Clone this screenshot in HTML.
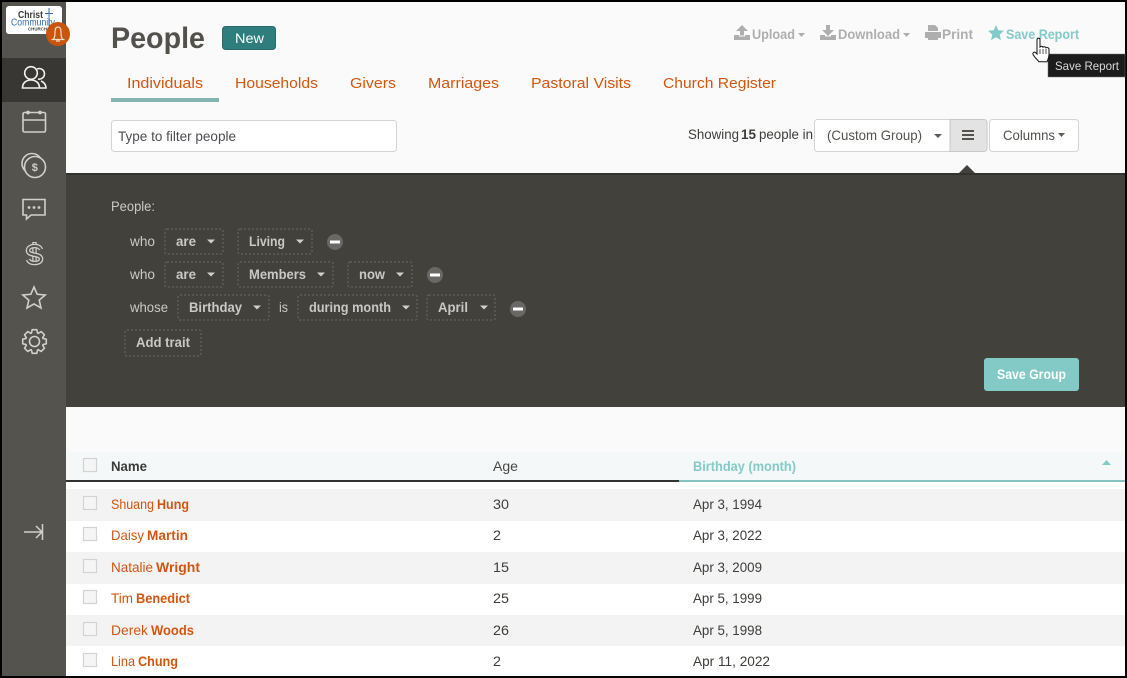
<!DOCTYPE html>
<html><head><meta charset="utf-8"><title>People</title>
<style>
html,body{margin:0;padding:0;width:1127px;height:678px;overflow:hidden;background:#000}
svg{display:block}
text{font-family:"Liberation Sans",sans-serif;font-size:14px;fill:#4a4845}
.o{fill:#d2560f;font-size:14px}
.ob{fill:#d2560f;font-size:14px;font-weight:bold}
.t{fill:#d2560f;font-size:15px}
.g{fill:#aeaeae;font-size:14px;font-weight:bold}
.d{fill:#c9c9c6;font-size:14px}
.db{fill:#c8c8c5;font-size:14px;font-weight:bold}
.tr{fill:#3f3d3a;font-size:14px}
.box{fill:none;stroke:#5f5d58;stroke-width:1.5;stroke-dasharray:2 2}
.ic{fill:none;stroke:#cfcfcc;stroke-width:1.6}
.cb{fill:#f5f5f5;stroke:#d3d3d3;stroke-width:1.2}
</style></head><body>
<svg width="1127" height="678" viewBox="0 0 1127 678" xmlns="http://www.w3.org/2000/svg">
<rect width="1127" height="678" fill="#000"/>
<rect x="2" y="2" width="1123" height="674" fill="#fafafa"/>
<!-- sidebar -->
<rect x="2" y="2" width="64" height="674" fill="#55534d"/>
<rect x="2" y="58" width="64" height="44" fill="#393734"/>
<!-- logo -->
<rect x="6" y="6" width="56" height="28" rx="3" fill="#fff"/>
<path d="M49 8V26M45 13.500H53" stroke="#2f6fae" stroke-width="1"/>
<text x="18" y="18" textLength="25" lengthAdjust="spacingAndGlyphs" style="font-size:10px;font-weight:bold;fill:#3a3a3a">Christ</text>
<text x="11" y="25.500" textLength="44" lengthAdjust="spacingAndGlyphs" style="font-size:10px;fill:#2f6fae">Community</text>
<text x="28" y="30.500" textLength="19" lengthAdjust="spacingAndGlyphs" style="font-size:4.500px;font-weight:bold;fill:#444">CHURCH</text>
<circle cx="58" cy="34" r="12" fill="#c9540c"/>
<path d="M51.500 39.500h13M53.500 39c1.500-2 1.500-4 1.500-7s1-5 3-5 3 2 3 5 0 5 1.500 7M56 41h4" fill="none" stroke="#f5d9c3" stroke-width="1.200"/>
<!-- people icon -->
<g fill="none" stroke="#f2f2f0" stroke-width="1.600">
<circle cx="31" cy="73" r="6.300"/>
<path d="M37 69a5.300 5.300 0 1 1 1 10"/>
<path d="M22.500 88c0-5 3.500-8 8.500-8s8.500 3 8.500 8z"/>
<path d="M41 81c3 1 5 4 5 7h-6"/>
</g>
<!-- calendar -->
<g class="ic"><rect x="23" y="112.500" width="22.500" height="19.500" rx="1.500"/><path d="M23 120H45.500"/></g>
<circle cx="28" cy="112.500" r="1.900" fill="#cfcfcc"/><circle cx="40" cy="112.500" r="1.900" fill="#cfcfcc"/>
<!-- coins -->
<circle class="ic" cx="32" cy="163.500" r="10"/>
<circle cx="35" cy="167" r="10.500" fill="#55534d" stroke="#cfcfcc" stroke-width="1.600"/>
<text x="31.800" y="171" style="font-size:11px;font-weight:bold;fill:#cfcfcc">$</text>
<!-- chat -->
<path class="ic" d="M23 199.500H45V215H31L26.500 219V215H23z"/>
<g fill="#cfcfcc"><circle cx="29" cy="207.500" r="1.400"/><circle cx="34" cy="207.500" r="1.400"/><circle cx="39" cy="207.500" r="1.400"/></g>
<!-- dollar -->
<g fill="none">
<path d="M34.500 242V265" stroke="#cfcfcc" stroke-width="4.500"/>
<path d="M34.500 243V264" stroke="#55534d" stroke-width="2"/>
<path d="M41 249.500c-1-2.500-3.500-3.500-6.500-3.500-4 0-6.500 2-6.500 4.500 0 6 13 2.500 13 8.500 0 2.500-2.500 4-6.500 4-3 0-5.500-1-6.500-3.500" stroke="#cfcfcc" stroke-width="4.600"/>
<path d="M41 249.500c-1-2.500-3.500-3.500-6.500-3.500-4 0-6.500 2-6.500 4.500 0 6 13 2.500 13 8.500 0 2.500-2.500 4-6.500 4-3 0-5.500-1-6.500-3.500" stroke="#55534d" stroke-width="2"/>
</g>
<!-- star -->
<path class="ic" d="M34 287l3.200 7.300 8 .7-6 5.200 1.800 7.800-7-4.100-7 4.100 1.800-7.800-6-5.200 8-.7z"/>
<!-- gear -->
<g class="ic" transform="translate(34.500 341.500)" stroke-linejoin="round"><circle r="5"/><polygon points="8.46,-3.08 11.78,-2.29 11.78,2.29 8.46,3.08 8.16,3.80 9.95,6.71 6.71,9.95 3.80,8.16 3.08,8.46 2.29,11.78 -2.29,11.78 -3.08,8.46 -3.80,8.16 -6.71,9.95 -9.95,6.71 -8.16,3.80 -8.46,3.08 -11.78,2.29 -11.78,-2.29 -8.46,-3.08 -8.16,-3.80 -9.95,-6.71 -6.71,-9.95 -3.80,-8.16 -3.08,-8.46 -2.29,-11.78 2.29,-11.78 3.08,-8.46 3.80,-8.16 6.71,-9.95 9.95,-6.71 8.16,-3.80"/></g>
<!-- collapse -->
<path d="M24 532H41M36 526l6 6-6 6M42.500 524V540" fill="none" stroke="#cfcfcc" stroke-width="1.500"/>

<!-- header -->
<text x="111" y="48" textLength="94" lengthAdjust="spacingAndGlyphs" style="font-size:30px;font-weight:bold;fill:#54514d">People</text>
<rect x="222.500" y="26.500" width="53" height="23" rx="3" fill="#2f7d7c" stroke="#286b6a"/>
<text x="235" y="43" textLength="29" lengthAdjust="spacingAndGlyphs" style="font-size:14px;fill:#fff">New</text>

<!-- toolbar -->
<path d="M734 35h5v1.500h6V35h5v5h-16zM742 25l6 6h-4v4.500h-4V31h-4z" fill="#aeaeae"/>
<text class="g" x="752" y="39" textLength="43" lengthAdjust="spacingAndGlyphs">Upload</text>
<path d="M798 33h7l-3.500 4z" fill="#aeaeae"/>
<path d="M820 35h5v1.500h6V35h5v5h-16zM826 25h4v5h4l-6 6-6-6h4z" fill="#aeaeae"/>
<text class="g" x="838" y="39" textLength="62" lengthAdjust="spacingAndGlyphs">Download</text>
<path d="M903 33h7l-3.500 4z" fill="#aeaeae"/>
<path d="M928 25h7l3 3v3h-10zM925 32h16v6h-3v2h-10v-2h-3z" fill="#aeaeae"/>
<text class="g" x="942" y="39" textLength="31" lengthAdjust="spacingAndGlyphs">Print</text>
<path d="M996 25l2.300 5.200 5.700.6-4.300 3.800 1.300 5.600-5-3-5 3 1.300-5.600-4.300-3.800 5.700-.6z" fill="#83cbc9"/>
<text x="1006" y="39" textLength="73" lengthAdjust="spacingAndGlyphs" style="font-weight:bold;fill:#83cbc9">Save Report</text>
<!-- tooltip -->
<rect x="1048" y="54" width="77" height="23" fill="#1c1c1c" stroke="#777" stroke-width=".5"/>
<text x="1055" y="70" textLength="64" lengthAdjust="spacingAndGlyphs" style="font-size:12px;fill:#d9d9d9">Save Report</text>
<!-- cursor -->
<path d="M1037 40c0-2.500 3-2.500 3 0v7c1-1 2.500-1 3 .2 1-.8 2.500-.6 3 .6 1-.6 3-.2 3 1.500v5c0 3-1 5-2 7.500h-8c-1.500-2-5-5-6-7.500-.5-1.500 1-2.800 2.500-1.800l1.500 1.500z" fill="#fff" stroke="#111" stroke-width="1"/>
<path d="M1040 49v5M1043 49v5M1046 49v5" stroke="#111" stroke-width=".7"/>

<!-- tabs -->
<text class="t" x="127" y="88" textLength="76" lengthAdjust="spacingAndGlyphs">Individuals</text>
<rect x="111" y="98" width="108" height="4" fill="#85b3b0"/>
<text class="t" x="235" y="88" textLength="83" lengthAdjust="spacingAndGlyphs">Households</text>
<text class="t" x="350" y="88" textLength="46" lengthAdjust="spacingAndGlyphs">Givers</text>
<text class="t" x="428" y="88" textLength="71" lengthAdjust="spacingAndGlyphs">Marriages</text>
<text class="t" x="531" y="88" textLength="100" lengthAdjust="spacingAndGlyphs">Pastoral Visits</text>
<text class="t" x="663" y="88" textLength="113" lengthAdjust="spacingAndGlyphs">Church Register</text>

<!-- filter -->
<rect x="111.500" y="120.500" width="285" height="31" rx="3" fill="#fff" stroke="#d4d4d4"/>
<text x="118" y="141" textLength="118" lengthAdjust="spacingAndGlyphs" style="fill:#4b4d52">Type to filter people</text>
<text x="688" y="139" textLength="51" lengthAdjust="spacingAndGlyphs" style="fill:#3f3d3a">Showing</text>
<text x="741" y="139" textLength="15" lengthAdjust="spacingAndGlyphs" style="font-weight:bold;fill:#3f3d3a">15</text>
<text x="759" y="139" textLength="54" lengthAdjust="spacingAndGlyphs" style="fill:#3f3d3a">people in</text>
<path d="M950 119.500H817.500a3 3 0 0 0-3 3v26a3 3 0 0 0 3 3H950z" fill="#fff" stroke="#d4d4d4"/>
<path d="M950 119.500h34a3 3 0 0 1 3 3v26a3 3 0 0 1-3 3h-34z" fill="#e3e3e3" stroke="#c8c8c8"/>
<text x="827" y="140" textLength="95" lengthAdjust="spacingAndGlyphs" style="fill:#55524e">(Custom Group)</text>
<path d="M934 134h8l-4 4z" fill="#5f5d58"/>
<path d="M962 131h12M962 135h12M962 139h12" stroke="#55524e" stroke-width="1.900"/>
<rect x="989.500" y="119.500" width="89" height="32" rx="3" fill="#fff" stroke="#d4d4d4"/>
<text x="1003" y="140" textLength="52" lengthAdjust="spacingAndGlyphs" style="fill:#55524e">Columns</text>
<path d="M1058 133h7l-3.500 4z" fill="#5f5d58"/>

<!-- dark panel -->
<rect x="66" y="173" width="1059" height="234" fill="#43413c"/>
<rect x="66" y="173" width="1059" height="2" fill="#353330"/>
<path d="M959 173l8-8 8 8z" fill="#43413c"/>
<text class="d" x="111" y="211" textLength="44" lengthAdjust="spacingAndGlyphs">People:</text>

<text class="d" x="130" y="246" textLength="25" lengthAdjust="spacingAndGlyphs">who</text>
<rect class="box" x="165" y="229" width="58" height="25" rx="2"/>
<text class="db" x="176" y="246" textLength="20" lengthAdjust="spacingAndGlyphs">are</text>
<path d="M207 239.500h8l-4 4z" fill="#cfcfcc"/>
<rect class="box" x="238" y="229" width="74" height="25" rx="2"/>
<text class="db" x="249" y="246" textLength="36" lengthAdjust="spacingAndGlyphs">Living</text>
<path d="M296 239.500h8l-4 4z" fill="#cfcfcc"/>
<circle cx="335" cy="242" r="8" fill="#6a6864"/><rect x="330" y="240.500" width="10" height="3" fill="#fff"/>

<text class="d" x="130" y="279" textLength="25" lengthAdjust="spacingAndGlyphs">who</text>
<rect class="box" x="165" y="262" width="58" height="25" rx="2"/>
<text class="db" x="176" y="279" textLength="20" lengthAdjust="spacingAndGlyphs">are</text>
<path d="M207 272.500h8l-4 4z" fill="#cfcfcc"/>
<rect class="box" x="238" y="262" width="95" height="25" rx="2"/>
<text class="db" x="249" y="279" textLength="57" lengthAdjust="spacingAndGlyphs">Members</text>
<path d="M317 272.500h8l-4 4z" fill="#cfcfcc"/>
<rect class="box" x="348" y="262" width="64" height="25" rx="2"/>
<text class="db" x="359" y="279" textLength="26" lengthAdjust="spacingAndGlyphs">now</text>
<path d="M396 272.500h8l-4 4z" fill="#cfcfcc"/>
<circle cx="435" cy="275" r="8" fill="#6a6864"/><rect x="430" y="273.500" width="10" height="3" fill="#fff"/>

<text class="d" x="130" y="312" textLength="38" lengthAdjust="spacingAndGlyphs">whose</text>
<rect class="box" x="178" y="295" width="91" height="25" rx="2"/>
<text class="db" x="189" y="312" textLength="53" lengthAdjust="spacingAndGlyphs">Birthday</text>
<path d="M253 305.500h8l-4 4z" fill="#cfcfcc"/>
<text class="d" x="279" y="312" textLength="9" lengthAdjust="spacingAndGlyphs">is</text>
<rect class="box" x="298" y="295" width="119" height="25" rx="2"/>
<text class="db" x="309" y="312" textLength="82" lengthAdjust="spacingAndGlyphs">during month</text>
<path d="M402 305.500h8l-4 4z" fill="#cfcfcc"/>
<rect class="box" x="427" y="295" width="68" height="25" rx="2"/>
<text class="db" x="438" y="312" textLength="30" lengthAdjust="spacingAndGlyphs">April</text>
<path d="M480 305.500h8l-4 4z" fill="#cfcfcc"/>
<circle cx="518" cy="309" r="8" fill="#6a6864"/><rect x="513" y="307.500" width="10" height="3" fill="#fff"/>

<rect class="box" x="125" y="330" width="76" height="26" rx="2"/>
<text class="db" x="136" y="347" textLength="54" lengthAdjust="spacingAndGlyphs">Add trait</text>
<rect x="984" y="358" width="95" height="33" rx="3" fill="#83c9c6"/>
<text x="997" y="379" textLength="69" lengthAdjust="spacingAndGlyphs" style="font-weight:bold;fill:#fff">Save Group</text>

<!-- table -->
<rect x="66" y="452" width="1059" height="28" fill="#f4f8f8"/>
<rect x="66" y="480" width="613" height="2" fill="#333"/>
<rect x="679" y="480" width="446" height="2" fill="#83c4c1"/>
<rect x="66" y="482" width="1059" height="7" fill="#fff"/>
<rect x="66" y="489" width="1059" height="32" fill="#f3f3f3"/>
<rect x="66" y="521" width="1059" height="31" fill="#fff"/>
<rect x="66" y="552" width="1059" height="32" fill="#f3f3f3"/>
<rect x="66" y="584" width="1059" height="31" fill="#fff"/>
<rect x="66" y="615" width="1059" height="31" fill="#f3f3f3"/>
<rect x="66" y="646" width="1059" height="30" fill="#fff"/>

<rect class="cb" x="83.500" y="458.500" width="13" height="13"/>
<text x="111" y="471" textLength="36" lengthAdjust="spacingAndGlyphs" style="font-weight:bold;fill:#3a3a3a">Name</text>
<text x="493" y="471" textLength="25" lengthAdjust="spacingAndGlyphs" style="fill:#4a4845">Age</text>
<text x="693" y="471" textLength="103" lengthAdjust="spacingAndGlyphs" style="font-weight:bold;fill:#83cbc9">Birthday (month)</text>
<path d="M1102 465l4.500-5 4.500 5z" fill="#83cbc9"/>

<rect class="cb" x="83.500" y="496.500" width="13" height="13"/>
<text class="o" x="111" y="509" textLength="43" lengthAdjust="spacingAndGlyphs">Shuang</text><text class="ob" x="157" y="509" textLength="32" lengthAdjust="spacingAndGlyphs">Hung</text>
<text class="tr" x="493" y="509" textLength="16" lengthAdjust="spacingAndGlyphs">30</text>
<text class="tr" x="693" y="509" textLength="69" lengthAdjust="spacingAndGlyphs">Apr 3, 1994</text>

<rect class="cb" x="83.500" y="527.500" width="13" height="13"/>
<text class="o" x="111" y="540" textLength="33" lengthAdjust="spacingAndGlyphs">Daisy</text><text class="ob" x="147" y="540" textLength="41" lengthAdjust="spacingAndGlyphs">Martin</text>
<text class="tr" x="493" y="540" textLength="8" lengthAdjust="spacingAndGlyphs">2</text>
<text class="tr" x="693" y="540" textLength="69" lengthAdjust="spacingAndGlyphs">Apr 3, 2022</text>

<rect class="cb" x="83.500" y="559.500" width="13" height="13"/>
<text class="o" x="111" y="572" textLength="42" lengthAdjust="spacingAndGlyphs">Natalie</text><text class="ob" x="156" y="572" textLength="44" lengthAdjust="spacingAndGlyphs">Wright</text>
<text class="tr" x="493" y="572" textLength="16" lengthAdjust="spacingAndGlyphs">15</text>
<text class="tr" x="693" y="572" textLength="69" lengthAdjust="spacingAndGlyphs">Apr 3, 2009</text>

<rect class="cb" x="83.500" y="590.500" width="13" height="13"/>
<text class="o" x="111" y="603" textLength="22" lengthAdjust="spacingAndGlyphs">Tim</text><text class="ob" x="136" y="603" textLength="54" lengthAdjust="spacingAndGlyphs">Benedict</text>
<text class="tr" x="493" y="603" textLength="16" lengthAdjust="spacingAndGlyphs">25</text>
<text class="tr" x="693" y="603" textLength="69" lengthAdjust="spacingAndGlyphs">Apr 5, 1999</text>

<rect class="cb" x="83.500" y="622.500" width="13" height="13"/>
<text class="o" x="111" y="635" textLength="37" lengthAdjust="spacingAndGlyphs">Derek</text><text class="ob" x="151" y="635" textLength="43" lengthAdjust="spacingAndGlyphs">Woods</text>
<text class="tr" x="493" y="635" textLength="16" lengthAdjust="spacingAndGlyphs">26</text>
<text class="tr" x="693" y="635" textLength="69" lengthAdjust="spacingAndGlyphs">Apr 5, 1998</text>

<rect class="cb" x="83.500" y="653.500" width="13" height="13"/>
<text class="o" x="111" y="666" textLength="24" lengthAdjust="spacingAndGlyphs">Lina</text><text class="ob" x="138" y="666" textLength="40" lengthAdjust="spacingAndGlyphs">Chung</text>
<text class="tr" x="493" y="666" textLength="8" lengthAdjust="spacingAndGlyphs">2</text>
<text class="tr" x="693" y="666" textLength="77" lengthAdjust="spacingAndGlyphs">Apr 11, 2022</text>
</svg>
</body></html>
